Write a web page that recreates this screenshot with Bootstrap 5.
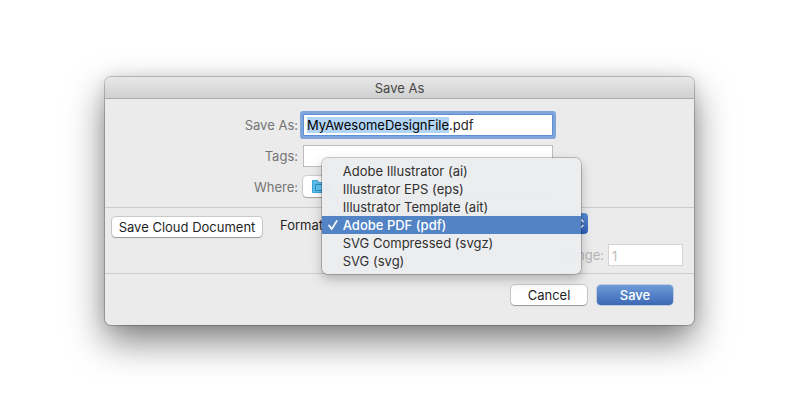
<!DOCTYPE html>
<html lang="en">
<head>
<meta charset="utf-8">
<meta name="viewport" content="width=device-width, initial-scale=1">
<title>Save As</title>
<link href="https://cdn.jsdelivr.net/npm/bootstrap@5.3.0/dist/css/bootstrap.min.css" rel="stylesheet">
<style>
  body { font-family: Inter, "Liberation Sans", sans-serif; font-size: 13px; line-height: 18px; color: #262626; background: #fff; }
  .page { padding: 77px 17px 40px 16px; }
  .save-dialog { max-width: 589px; background: #ebebeb; border-radius: 6px;
    box-shadow: 0 0 0 1px rgba(0,0,0,.2), 0 16px 36px rgba(0,0,0,.5), 0 0 14px rgba(0,0,0,.1); }
  .title-bar { height: 22px; padding: 2px 0; background: linear-gradient(#e8e8e8, #d0d0d0); border-bottom: 1px solid #acacac; border-radius: 6px 6px 0 0; color: #474747; font-size: 13px; line-height: 18px; }
  .file-fields { display: grid; grid-template-columns: 193px minmax(0, 250px); column-gap: 5px; row-gap: 9px; padding: 15px 8px 9px 0; }
  .file-fields label { color: #757575; text-align: right; line-height: 22px; }
  .field { display: block; height: 22px; padding: 0 3px; border: 1px solid #bdbdbd; border-radius: 0; background: #fff; color: #262626; font-size: 13px; line-height: 18px; width: 100%; outline: 0; }
  .field-name { border-color: #5e8ed4; border-radius: 1px; box-shadow: 0 0 0 3px #7fa5db; }
  .field::selection { background: #b3d5f5; color: #000; }
  .popup { appearance: none; display: block; width: 100%; height: 21px; border: 0; border-radius: 4px; background: #fff; box-shadow: 0 0 0 1px rgba(0,0,0,.12), 0 1px 1px rgba(0,0,0,.22); }
  .popup-blue { background: linear-gradient(#5b8ed6, #2f5fb8); box-shadow: none; }
  .folder { position: absolute; left: 9px; top: 3px; }
  .arrows { position: absolute; right: 4px; top: 4px; }
  .options { border-top: 1px solid #cbcbcb; border-bottom: 1px solid #cbcbcb; padding: 5px 11px 7px 7px; column-gap: 18px; }
  .push { height: 20px; min-width: 76px; padding: 0 8px; border: 0; border-radius: 4px; background: #fff; color: #1f1f1f; font-size: 13px; line-height: 20px; box-shadow: 0 0 0 1px rgba(0,0,0,.14), 0 1px 1px rgba(0,0,0,.25); }
  .push-cloud { margin-top: 4px; width: 150px; padding: 0; }
  .push-save { background: linear-gradient(#6d9bd9, #3c68b4); color: #fff; font-weight: 500; box-shadow: 0 0 0 1px #3f6cb440; }
  .format-box { width: 258px; margin-left: 3px; }
  .format-menu { left: -8px; top: -55px; width: 259px; padding: 4px 0; font-size: 13px; color: #303030; border: 0; border-radius: 6px; background: rgba(236,237,239,.98);
    box-shadow: 0 0 0 1px rgba(0,0,0,.2), 0 5px 12px rgba(0,0,0,.25); }
  .format-menu .dropdown-item { position: relative; height: 18px; padding: 0 21px; line-height: 18px; color: inherit; }
  .format-menu .dropdown-item.active { background: #5183c5; color: #fff; font-weight: 500; }
  .tick { position: absolute; left: 5px; top: 3px; }
  .range-row { margin-top: 10px; column-gap: 4px; color: #b4b4b4; line-height: 22px; }
  .range-field { width: 75px; color: #bcbcbc; border-color: #d4d4d4; padding-top: 2px; }
  .actions { padding: 11px 21px 20px; column-gap: 10px; }
</style>
<script src="https://cdn.jsdelivr.net/npm/bootstrap@5.3.0/dist/js/bootstrap.bundle.min.js"></script>
</head>
<body>
<main class="page min-vh-100">
  <form class="save-dialog mx-auto" role="dialog" aria-labelledby="dialog-title">
    <h1 class="title-bar text-center fw-normal m-0" id="dialog-title">Save As</h1>
    <div class="file-fields">
      <label for="name">Save As:</label>
      <input class="field field-name" id="name" type="text" value="MyAwesomeDesignFile.pdf" spellcheck="false" autofocus>
      <label for="tags">Tags:</label>
      <input class="field" id="tags" type="text">
      <label for="where">Where:</label>
      <div class="position-relative">
        <select class="popup" id="where"><option></option></select>
        <svg class="folder" width="18" height="15" viewBox="0 0 18 15" aria-hidden="true">
          <path d="M.5 13.5V1.500h5l1.500 2h10v10z" fill="#5fc0ee" stroke="#38a5dc"/>
          <path d="M3.500 5.500h11v6h-11z" fill="#66c5f0" stroke="#248fc7"/>
        </svg>
      </div>
    </div>
    <div class="options d-flex align-items-start">
      <button class="push push-cloud flex-shrink-0" type="button">Save Cloud Document</button>
      <div class="flex-grow-1">
        <div class="d-flex">
          <label for="format" class="pt-1 lh-sm">Format:</label>
          <div class="format-box position-relative">
            <select class="popup popup-blue" id="format"><option></option></select>
            <svg class="arrows" width="8" height="13" viewBox="0 0 8 13" fill="none" stroke="#fff" stroke-width="1.500" stroke-linecap="round" stroke-linejoin="round" aria-hidden="true"><path d="M1 4.500l3-3 3 3M1 8.500l3 3 3-3"/></svg>
            <div class="dropdown-menu show format-menu">
              <button class="dropdown-item" type="button">Adobe Illustrator (ai)</button>
              <button class="dropdown-item" type="button">Illustrator EPS (eps)</button>
              <button class="dropdown-item" type="button">Illustrator Template (ait)</button>
              <button class="dropdown-item active" type="button"><svg class="tick" width="12" height="12" viewBox="0 0 12 12" fill="none" stroke="#fff" stroke-width="1.700" stroke-linecap="round" stroke-linejoin="round" aria-hidden="true"><path d="M2 6.500l2.700 3.500L9.800 2"/></svg>Adobe PDF (pdf)</button>
              <button class="dropdown-item" type="button">SVG Compressed (svgz)</button>
              <button class="dropdown-item" type="button">SVG (svg)</button>
            </div>
          </div>
        </div>
        <div class="range-row d-flex justify-content-end">
          <label for="range">Range:</label>
          <input class="field range-field" id="range" type="text" value="1" disabled>
        </div>
      </div>
    </div>
    <div class="actions d-flex justify-content-end">
      <button class="push" type="button">Cancel</button>
      <button class="push push-save" type="submit">Save</button>
    </div>
  </form>
</main>
<script>
  const nameField = document.getElementById('name');
  nameField.focus();
  nameField.setSelectionRange(0, nameField.value.lastIndexOf('.'));
</script>
</body>
</html>
